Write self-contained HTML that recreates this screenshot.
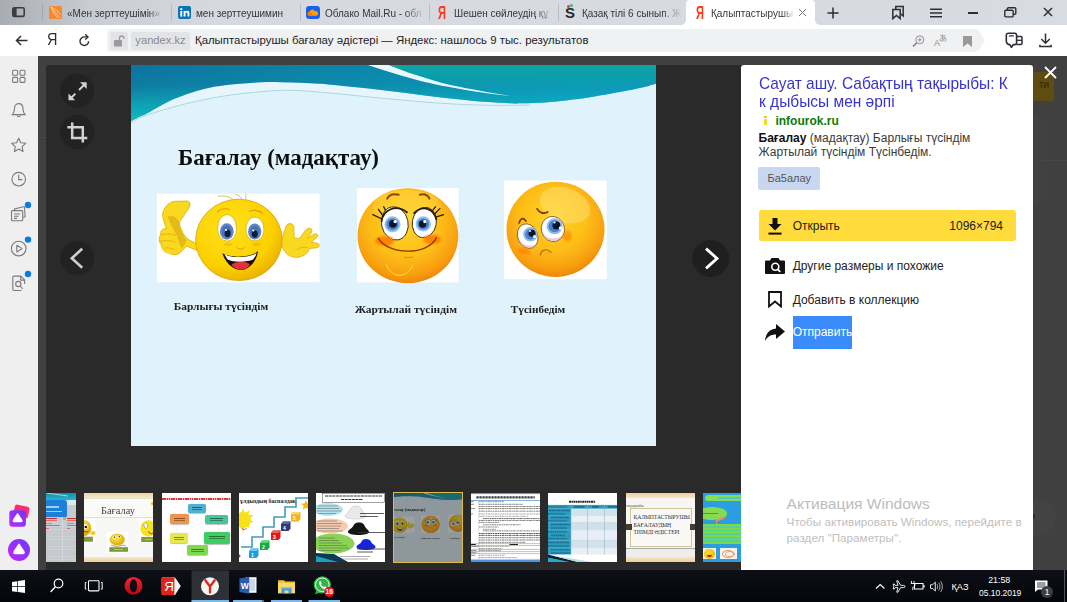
<!DOCTYPE html>
<html><head><meta charset="utf-8">
<style>
*{box-sizing:border-box;margin:0;padding:0}
html,body{width:1067px;height:602px;overflow:hidden;background:#404040;font-family:"Liberation Sans",sans-serif;}
.abs{position:absolute}
#tabbar{left:0;top:0;width:1067px;height:25px;background:linear-gradient(90deg,#a9acb3 0px,#c9ccd3 90px,#d6d9e0 220px,#d8dbe2 1067px);}
.tab{position:absolute;top:0;height:26px;font-size:10.5px;color:#33363c;line-height:26.500px;white-space:nowrap;overflow:hidden}
.tabsep{position:absolute;top:4px;width:1px;height:17px;background:#b9bcc3}
#toolbar{left:0;top:25px;width:1067px;height:31px;background:#fff}
#addr{left:107px;top:29px;width:871px;height:23px;background:#f0f1f3;border-radius:3px}
#sidebar{left:0;top:56px;width:37.500px;height:514px;background:#efefef}
#overlay{left:37.500px;top:56px;width:1029.500px;height:514px;background:#404040}
#viewer{left:46px;top:65px;width:696px;height:505px;background:#2a2a2a;border-radius:3px 0 0 0}
#slide{left:131px;top:65px;width:525px;height:381px;background:#e0f3fc;overflow:hidden}
#panel{left:741px;top:65px;width:292px;height:505px;background:#fff;border-radius:3px 3px 0 0}
#taskbar{left:0;top:570px;width:1067px;height:32px;background:linear-gradient(180deg,#2a2a2a 0,#2a2a2a .4px,#0c0f15 .5px,#04060b 100%)}
.thumb{position:absolute;top:493px;height:69px;width:69px;background:#fff;overflow:hidden}

.ya{font-size:18.500px;color:#fb3a1c;line-height:20px;font-weight:bold;transform:scaleX(.6);transform-origin:0 0}
.tt{display:inline-block;transform-origin:0 50%;transform:scaleX(.95)}
.fade{-webkit-mask-image:linear-gradient(90deg,#000 80%,transparent 100%);mask-image:linear-gradient(90deg,#000 80%,transparent 100%)}
.fade2{-webkit-mask-image:linear-gradient(90deg,#000 85%,transparent 100%);mask-image:linear-gradient(90deg,#000 85%,transparent 100%)}
.t12{font-size:12px;line-height:16px;color:#222;white-space:nowrap}
.sp{display:inline-block;transform-origin:0 50%}
.bx{border-radius:2px;box-shadow:0 .5px 1px rgba(0,0,0,.25)}
.bx:after{content:"";position:absolute;left:20%;right:20%;top:35%;height:1px;background:rgba(0,0,0,.45);box-shadow:0 2px 0 rgba(0,0,0,.35)}
</style></head><body>
<div id="tabbar" class="abs">
<svg class="abs" style="left:12px;top:7px" width="13" height="11" viewBox="0 0 13 11"><rect x="0.8" y="0.8" width="11.4" height="8.6" rx="1.5" fill="none" stroke="#3a3c40" stroke-width="1.6"/><rect x="1" y="1" width="3.6" height="8.4" fill="#3a3c40"/></svg>
<div class="tabsep" style="left:42px;background:#a4a7ae"></div>
<div class="tabsep" style="left:171px"></div>
<div class="tabsep" style="left:300px"></div>
<div class="tabsep" style="left:429px"></div>
<div class="tabsep" style="left:558px"></div>
<!-- tab1 -->
<svg class="abs" style="left:49px;top:6px" width="13" height="13" viewBox="0 0 13 13"><rect width="13" height="13" rx="1.5" fill="#f58a2e"/><path d="M2 1 L11 12 M2 1 Q8 3 12 9 M2 1 Q4 8 9 12" stroke="#ffd2a6" stroke-width="0.8" fill="none"/></svg>
<div class="tab fade2" style="left:67px;width:96px"><span class="tt" id="t1">«Мен зерттеушімін»</span></div>
<!-- tab2 -->
<svg class="abs" style="left:178px;top:6px" width="13" height="13" viewBox="0 0 13 13"><rect width="13" height="13" rx="2" fill="#0a73b7"/><rect x="2.3" y="5" width="1.9" height="5.6" fill="#fff"/><circle cx="3.25" cy="3.2" r="1.15" fill="#fff"/><path d="M5.6 5h1.8v.9c.4-.7 1.1-1.1 2-1.1 1.5 0 2 .9 2 2.5v3.3H9.500V7.700c0-.8-.2-1.300-.9-1.300-.8 0-1.100.6-1.100 1.300v2.900H5.600z" fill="#fff"/></svg>
<div class="tab" style="left:196px;width:100px"><span class="tt" id="t2">мен зерттеушимин</span></div>
<!-- tab3 -->
<svg class="abs" style="left:306px;top:6px" width="14" height="13" viewBox="0 0 14 13"><rect width="14" height="13" rx="3.2" fill="#1b5ff0"/><path d="M3 9.800a2 2 0 0 1 .3-3.900a3 3 0 0 1 5.600-.6a2.300 2.300 0 0 1 1.500 4.500z" fill="#ff9e00"/><path d="M3 9.800a2 2 0 0 1 .3-3.900 L8 9.800z" fill="#ff7a00"/></svg>
<div class="tab fade" style="left:325px;width:100px"><span class="tt" id="t3">Облако Mail.Ru - обл</span></div>
<!-- tab4 -->
<div class="abs ya" style="left:438px;top:2.500px">Я</div>
<div class="tab fade" style="left:454px;width:100px"><span class="tt" id="t4">Шешен сөйлеудің құ</span></div>
<!-- tab5 -->
<div class="abs" style="left:565px;top:4px;font-size:15px;font-weight:bold;color:#2a2a2a;line-height:17px">S</div>
<div class="abs" style="left:567px;top:5px;width:3px;height:3px;background:#e33;border-radius:50%"></div>
<div class="abs" style="left:570px;top:4px;width:3px;height:3px;background:#3b6;border-radius:50%"></div>
<div class="tab fade" style="left:582px;width:100px"><span class="tt" id="t5">Қазақ тілі 6 сынып. Ж</span></div>
<!-- active tab -->
<svg class="abs" style="left:680px;top:0" width="142" height="25" viewBox="0 0 142 25"><path d="M0 25 C4 25 6 23 6 19 L6 4 Q6 0 10 0 L131 0 Q135 0 135 4 L135 19 C135 23 137 25 142 25 Z" fill="#fff"/></svg>
<div class="abs ya" style="left:695.600px;top:2.500px">Я</div>
<div class="tab fade2" style="left:711px;width:84px"><span class="tt" id="t6">Қалыптастырушы б</span></div>
<svg class="abs" style="left:798px;top:8px" width="9" height="9" viewBox="0 0 9 9"><path d="M1 1L8 8M8 1L1 8" stroke="#777" stroke-width="1"/></svg>
<!-- plus -->
<svg class="abs" style="left:827px;top:7px" width="12" height="12" viewBox="0 0 12 12"><path d="M6 0.500V11.500M0.500 6H11.500" stroke="#2c2e33" stroke-width="1.500"/></svg>
<!-- bookmarks -->
<svg class="abs" style="left:891px;top:5px" width="14" height="15" viewBox="0 0 14 15"><path d="M1.800 4.600h7.400v9l-3.700-3.200-3.700 3.200z" fill="none" stroke="#2c2e33" stroke-width="1.500" stroke-linejoin="miter"/><path d="M4.800 4V1.500h7.400v9.500l-2.400-2" fill="none" stroke="#2c2e33" stroke-width="1.500"/></svg>
<!-- menu -->
<svg class="abs" style="left:930px;top:8px" width="12" height="10" viewBox="0 0 12 10"><path d="M0 1.200H12M0 5H12M0 8.800H12" stroke="#2c2e33" stroke-width="1.400"/></svg>
<!-- minimize -->
<div class="abs" style="left:968px;top:12px;width:10px;height:1.500px;background:#2c2e33"></div>
<!-- restore -->
<svg class="abs" style="left:1004px;top:7px" width="13" height="11" viewBox="0 0 13 11"><rect x="0.800" y="3.300" width="8.400" height="6.600" rx="1" fill="none" stroke="#2c2e33" stroke-width="1.400"/><path d="M3.400 3V1.700a1 1 0 0 1 1-1h6.400a1 1 0 0 1 1 1v4.600a1 1 0 0 1-1 1H9.500" fill="none" stroke="#2c2e33" stroke-width="1.400"/></svg>
<!-- close -->
<svg class="abs" style="left:1043px;top:7px" width="10" height="10" viewBox="0 0 10 10"><path d="M1 1L9 9M9 1L1 9" stroke="#2c2e33" stroke-width="1.500"/></svg>
</div>
<div id="toolbar" class="abs">
<!-- back -->
<svg class="abs" style="left:15px;top:10px" width="13" height="11" viewBox="0 0 13 11"><path d="M12.500 5.500H1.500M6 1L1.500 5.500L6 10" fill="none" stroke="#2c2e33" stroke-width="1.500"/></svg>
<div class="abs" style="left:47px;top:5px;font-size:17px;line-height:20px;color:#2c2e33;transform:scaleX(.85);transform-origin:0 0">Я</div>
<!-- reload -->
<svg class="abs" style="left:78px;top:9px" width="13" height="13" viewBox="0 0 13 13"><path d="M10.600 7.200A4.300 4.300 0 1 1 6.300 2.900H9" fill="none" stroke="#2c2e33" stroke-width="1.400"/><path d="M7.300 0.300L10 2.900L7.300 5.500" fill="none" stroke="#2c2e33" stroke-width="1.400"/></svg>

<!-- feedback -->
<svg class="abs" style="left:1005px;top:7px" width="19" height="17" viewBox="0 0 19 17"><path d="M1.300 3.200a2 2 0 0 1 2-2h6.300a2 2 0 0 1 2 2v7.800a1.600 1.600 0 0 1-1.600 1.600H8.200L6.500 15.300 4.800 12.600a3.500 3.500 0 0 1-3.500-3.500z" fill="none" stroke="#2c2e33" stroke-width="1.600" stroke-linejoin="round"/><path d="M4.500 3.900h3.800" stroke="#2c2e33" stroke-width="1.400" stroke-linecap="round"/><path d="M11.600 4.400h4.400a1 1 0 0 1 1 1v6.200a1 1 0 0 1-1 1h-4.400" fill="none" stroke="#2c2e33" stroke-width="1.500"/><path d="M11.600 8.300h5.400" stroke="#2c2e33" stroke-width="1.300"/></svg>
<!-- download -->
<svg class="abs" style="left:1039px;top:8px" width="13" height="15" viewBox="0 0 13 15"><path d="M6.500 0.500V10M2.300 6L6.500 10.200L10.700 6" fill="none" stroke="#2c2e33" stroke-width="1.500"/><path d="M0.900 11.800V13.600H12.100V11.800" fill="none" stroke="#2c2e33" stroke-width="1.500"/></svg>
</div>
<div id="addr" class="abs">
<svg class="abs" style="left:871px;top:0" width="7" height="23" viewBox="0 0 7 23"><path d="M0 0L7 11.500L0 23z" fill="#f0f1f3"/></svg>
<div class="abs" style="left:3px;top:3px;width:18px;height:17.500px;background:#e3e4e7;border-radius:2px"></div>
<svg class="abs" style="left:7px;top:6px" width="11" height="12" viewBox="0 0 11 12"><rect x="0" y="5" width="8" height="6.500" rx="0.800" fill="#9b9b9b"/><path d="M5.500 5V3.200a2.200 2.200 0 0 1 4.400 0V4" fill="none" stroke="#9b9b9b" stroke-width="1.300"/></svg>
<div class="abs" style="left:24px;top:3px;width:59px;height:17.500px;background:#e3e4e7;border-radius:2px;font-size:11.2px;line-height:17.500px;color:#8a8a8a;text-align:center"><span id="dom" style="display:inline-block">yandex.kz</span></div>
<div class="abs" style="left:88px;top:0;font-size:11.4px;line-height:23.500px;color:#222;white-space:nowrap"><span id="ttl" style="display:inline-block;transform-origin:0 50%">Қалыптастырушы бағалау әдістері — Яндекс: нашлось 9 тыс. результатов</span></div>
<!-- zoom -->
<svg class="abs" style="left:805px;top:6px" width="13" height="12" viewBox="0 0 13 12"><circle cx="7.800" cy="4.800" r="4" fill="none" stroke="#8f8f8f" stroke-width="1"/><path d="M5.800 4.800h4M7.800 2.800v4" stroke="#8f8f8f" stroke-width="0.900"/><path d="M4.800 7.800L1 11.400" stroke="#8f8f8f" stroke-width="1.800"/></svg>
<!-- translate -->
<div class="abs" style="left:827px;top:9px;font-size:9px;line-height:10px;color:#8f8f8f">A</div>
<svg class="abs" style="left:832px;top:5.300px" width="8" height="8" viewBox="0 0 8 8"><path d="M1 1.800H6.600M3.600 0.300C3.300 3 3.500 5.500 4.200 7.300M6 3.200C5.600 5.300 3.800 7 2.200 7C0.600 7 0.500 5.200 2 4.300C3.800 3.300 6.600 3.600 7.200 5.200C7.600 6.400 6.600 7.300 5.400 7.600" fill="none" stroke="#8f8f8f" stroke-width=".8"/></svg>
<!-- bookmark -->
<svg class="abs" style="left:856px;top:7px" width="9" height="11" viewBox="0 0 9 11"><path d="M0 0h9v11L4.500 7.500 0 11z" fill="#9a9a9a"/></svg>
</div>
<div id="sidebar" class="abs">
<svg class="abs" style="left:0;top:0" width="38" height="514" viewBox="0 56 38 514">
<g fill="none" stroke="#7a7a7a" stroke-width="1.100">
<!-- grid -->
<rect x="12.600" y="70.200" width="5" height="5" rx="1"/><rect x="20" y="70.200" width="5" height="5" rx="1"/><rect x="12.600" y="77.400" width="5" height="5" rx="1"/><rect x="20" y="77.400" width="5" height="5" rx="1"/>
<!-- bell -->
<path d="M18.700 103.600c-3 0-4.300 2.600-4.300 5.400 0 2.800-.8 4.200-2 5.600h12.600c-1.200-1.400-2-2.800-2-5.600 0-2.800-1.300-5.400-4.300-5.400z"/><path d="M17 115.400a1.800 1.800 0 0 0 3.400 0"/>
<!-- star -->
<path d="M18.700 138.200l2.100 4.500 4.900.6-3.600 3.400.9 4.800-4.300-2.400-4.300 2.400.9-4.800-3.600-3.400 4.900-.6z" stroke-linejoin="round"/>
<!-- clock -->
<circle cx="18.700" cy="179.200" r="6.800"/><path d="M18.700 174.800v4.800h3.600"/>
<!-- docs -->
<path d="M14.500 210.500l0-1.500 9-2.300a.8.800 0 0 1 1 .6l.6 9.500-1.800.5" /><rect x="11.500" y="210.600" width="11.200" height="10.200" rx="1"/><path d="M14 214h6M14 216.200h4.500M14 218.400h3"/>
<!-- play -->
<circle cx="18.700" cy="248.600" r="7.300"/><path d="M16.800 245.200l5.300 3.400-5.300 3.400z" stroke-linejoin="round"/>
<!-- searchdoc -->
<path d="M21.500 290.500h-7.500a1.200 1.200 0 0 1-1.200-1.200v-12a1.200 1.200 0 0 1 1.200-1.200h6.800l3.800 3.800v4"/><path d="M20.600 276.300v3.800h3.800"/><circle cx="18.300" cy="284" r="2.600"/><path d="M20.200 286l2.600 2.800"/>
</g>
<circle cx="28" cy="205" r="3.200" fill="#0a7bea"/><circle cx="28" cy="239.600" r="3.200" fill="#0a7bea"/><circle cx="28" cy="274" r="3.200" fill="#0a7bea"/>
<defs><linearGradient id="al" x1="0" y1="1" x2="1" y2="0"><stop offset="0" stop-color="#c02bf7"/><stop offset="1" stop-color="#6a36ff"/></linearGradient></defs>
<rect x="14" y="505.500" width="15" height="12" rx="2.500" fill="#ff2d6f" transform="rotate(12 21 511)"/>
<rect x="9.300" y="510.200" width="16.600" height="16.600" rx="3.200" fill="url(#al)"/>
<path d="M17.600 513.800l4.200 6.400q.7 1.400-1 1.400h-6.400q-1.700 0-1-1.400z" fill="#fff" stroke="#fff" stroke-width="1.200" stroke-linejoin="round"/>
<circle cx="19" cy="550" r="11" fill="url(#al)"/>
<path d="M19 544.400l4.800 7.400q.8 1.600-1.100 1.600h-7.400q-1.900 0-1.100-1.600z" fill="#fff" stroke="#fff" stroke-width="1.600" stroke-linejoin="round"/>
</svg>
</div>
<div id="overlay" class="abs"></div>
<div class="abs" style="left:37.500px;top:137px;width:9px;height:1px;background:#4a4a4a"></div><div id="viewer" class="abs">
<svg class="abs" style="left:0;top:0" width="696" height="505" viewBox="46 65 696 505">
<circle cx="77.200" cy="90.700" r="17" fill="#222"/>
<g stroke="#d2d2d2" stroke-width="2" fill="none"><path d="M79 90L84.500 84.500"/><path d="M75.400 93.600L70.500 98.500"/></g><path d="M80 82.200H86.700V88.900z" fill="#d2d2d2"/><path d="M68.500 93.500V100.200H75.200z" fill="#d2d2d2"/>
<circle cx="77.200" cy="132" r="17" fill="#222"/>
<g stroke="#d2d2d2" stroke-width="2.500" fill="none"><path d="M72.200 122.600V138H87.300"/><path d="M67.300 127.300H82.800V142.600"/></g>
<circle cx="77.200" cy="258.300" r="17" fill="#222"/>
<path d="M82.200 248.800L71.800 258.300L82.200 267.800" stroke="#cfcfcf" stroke-width="2.600" fill="none"/>
<circle cx="710.700" cy="258.500" r="18.500" fill="#1f1f1f"/>
<path d="M706 248.600L717 258.500L706 268.400" stroke="#fff" stroke-width="2.800" fill="none"/>
</svg>
</div>
<div id="slide" class="abs">
<svg class="abs" style="left:0;top:0" width="525" height="381" viewBox="131 65 525 381">
<defs>
<linearGradient id="teal" gradientUnits="userSpaceOnUse" x1="131" y1="0" x2="656" y2="0"><stop offset="0" stop-color="#08739f"/><stop offset="0.350" stop-color="#0882a6"/><stop offset="0.600" stop-color="#088ab0"/><stop offset="0.800" stop-color="#0890bc"/><stop offset="1" stop-color="#0894b8"/></linearGradient>
<linearGradient id="tealv" gradientUnits="userSpaceOnUse" x1="0" y1="65" x2="0" y2="122"><stop offset="0" stop-color="#10b8bc" stop-opacity="0"/><stop offset="0.350" stop-color="#10b8bc" stop-opacity=".12"/><stop offset="0.700" stop-color="#12b6bc" stop-opacity=".7"/><stop offset="1" stop-color="#14b8bc" stop-opacity="1"/></linearGradient>
<linearGradient id="tealg" gradientUnits="userSpaceOnUse" x1="0" y1="65" x2="0" y2="98"><stop offset="0" stop-color="#0aa4a6" stop-opacity="1"/><stop offset="0.450" stop-color="#0aa0aa" stop-opacity=".7"/><stop offset="1" stop-color="#0a9cb0" stop-opacity="0"/></linearGradient>
<radialGradient id="yel" cx="0.400" cy="0.350" r="0.700"><stop offset="0" stop-color="#ffe21a"/><stop offset="0.700" stop-color="#fbd000"/><stop offset="1" stop-color="#e8ad00"/></radialGradient>
<radialGradient id="org" cx="0.450" cy="0.350" r="0.700"><stop offset="0" stop-color="#ffd21c"/><stop offset="0.600" stop-color="#fdb813"/><stop offset="1" stop-color="#f08c0a"/></radialGradient>
<radialGradient id="org2" cx="0.480" cy="0.380" r="0.620"><stop offset="0" stop-color="#ffd42a"/><stop offset="0.550" stop-color="#fdbe16"/><stop offset="0.850" stop-color="#f8a010"/><stop offset="1" stop-color="#ee8808"/></radialGradient>
<radialGradient id="iris" cx="0.500" cy="0.500" r="0.500"><stop offset="0" stop-color="#4b86d8"/><stop offset="0.700" stop-color="#6ea6e6"/><stop offset="1" stop-color="#3f6fb8"/></radialGradient>
<filter id="bl2" x="-30%" y="-50%" width="160%" height="200%"><feGaussianBlur stdDeviation="1.300"/></filter>
<filter id="bl" x="-2%" y="-2%" width="104%" height="104%"><feGaussianBlur stdDeviation="0.550"/></filter>
</defs>
<g id="sc"><rect x="131" y="65" width="525" height="381" fill="#e0f3fc"/>
<g filter="url(#bl)">
<!-- wave -->
<path d="M131.0,121.2 C132.5,120.4 136.9,118.0 140.0,116.5 C143.1,115.0 144.9,114.4 149.7,111.9 C154.4,109.4 162.2,104.6 168.5,101.6 C174.8,98.6 180.9,96.3 187.2,94.1 C193.4,91.9 199.8,89.9 206.0,88.4 C212.2,86.9 218.4,86.0 224.7,85.2 C230.9,84.4 237.2,83.9 243.5,83.4 C249.8,82.9 255.9,82.4 262.2,82.2 C268.4,82.0 274.8,82.1 281.0,82.2 C287.2,82.3 293.5,82.5 299.7,82.8 C305.9,83.0 313.2,83.4 318.4,83.7 C323.6,84.0 322.6,83.9 331.0,84.7 C339.4,85.5 356.0,87.0 368.5,88.4 C381.0,89.8 393.5,91.5 406.0,93.1 C418.5,94.7 431.0,96.4 443.5,97.8 C456.0,99.2 470.1,100.7 481.0,101.6 C491.9,102.5 502.1,103.0 509.0,103.3 C515.9,103.6 520.2,103.3 522.5,103.3 L530,105 " fill="none"/>
<path d="M131.0,123.0 C132.9,122.0 136.5,119.0 142.2,116.8 C147.9,114.5 157.5,111.7 165.0,109.5 C172.5,107.3 177.2,105.7 187.2,103.4 C197.1,101.1 212.2,97.9 224.7,95.9 C237.2,93.9 251.3,92.5 262.2,91.6 C273.1,90.7 278.8,90.0 290.3,90.3 C301.8,90.5 314.9,91.7 331.0,93.1 C347.1,94.5 368.4,97.0 387.2,98.7 C405.9,100.4 426.3,102.3 443.5,103.4 C460.7,104.5 475.9,105.0 490.3,105.3 C504.7,105.6 523.4,105.0 530.0,105.0 L530,103 L509.0,103.3 L481.0,101.6 L443.5,97.8 L406.0,93.1 L368.5,88.4 L331.0,84.7 L318.4,83.7 L299.7,82.8 L281.0,82.2 L262.2,82.2 L243.5,83.4 L224.7,85.2 L206.0,88.4 L187.2,94.1 L168.5,101.6 L149.7,111.9 L140.0,116.5 L131.0,121.2 Z" fill="#e7f6fc"/>
<path d="M131.0,121.2 C132.5,120.4 136.9,118.0 140.0,116.5 C143.1,115.0 144.9,114.4 149.7,111.9 C154.4,109.4 162.2,104.6 168.5,101.6 C174.8,98.6 180.9,96.3 187.2,94.1 C193.4,91.9 199.8,89.9 206.0,88.4 C212.2,86.9 218.4,86.0 224.7,85.2 C230.9,84.4 237.2,83.9 243.5,83.4 C249.8,82.9 255.9,82.4 262.2,82.2 C268.4,82.0 274.8,82.1 281.0,82.2 C287.2,82.3 293.5,82.5 299.7,82.8 C305.9,83.0 313.2,83.4 318.4,83.7 C323.6,84.0 322.6,83.9 331.0,84.7 C339.4,85.5 356.0,87.0 368.5,88.4 C381.0,89.8 393.5,91.5 406.0,93.1 C418.5,94.7 431.0,96.4 443.5,97.8 C456.0,99.2 470.1,100.7 481.0,101.6 C491.9,102.5 502.1,103.0 509.0,103.3 C515.9,103.6 516.5,103.4 522.5,103.3 C528.5,103.2 537.5,103.0 545.0,102.5 C552.5,102.0 560.0,101.1 567.5,100.2 C575.0,99.3 581.2,98.6 590.0,97.2 C598.8,95.8 611.3,93.6 620.0,92.0 C628.7,90.4 636.4,88.9 642.4,87.5 C648.4,86.1 653.7,84.3 656.0,83.7 L660,83 L660,60 L125,60 L125,124 Z" fill="url(#teal)"/>
<path d="M131.0,121.2 C132.5,120.4 136.9,118.0 140.0,116.5 C143.1,115.0 144.9,114.4 149.7,111.9 C154.4,109.4 162.2,104.6 168.5,101.6 C174.8,98.6 180.9,96.3 187.2,94.1 C193.4,91.9 199.8,89.9 206.0,88.4 C212.2,86.9 218.4,86.0 224.7,85.2 C230.9,84.4 237.2,83.9 243.5,83.4 C249.8,82.9 255.9,82.4 262.2,82.2 C268.4,82.0 274.8,82.1 281.0,82.2 C287.2,82.3 293.5,82.5 299.7,82.8 C305.9,83.0 313.2,83.4 318.4,83.7 C323.6,84.0 322.6,83.9 331.0,84.7 C339.4,85.5 356.0,87.0 368.5,88.4 C381.0,89.8 393.5,91.5 406.0,93.1 C418.5,94.7 431.0,96.4 443.5,97.8 C456.0,99.2 470.1,100.7 481.0,101.6 C491.9,102.5 502.1,103.0 509.0,103.3 C515.9,103.6 516.5,103.4 522.5,103.3 C528.5,103.2 537.5,103.0 545.0,102.5 C552.5,102.0 560.0,101.1 567.5,100.2 C575.0,99.3 581.2,98.6 590.0,97.2 C598.8,95.8 611.3,93.6 620.0,92.0 C628.7,90.4 636.4,88.9 642.4,87.5 C648.4,86.1 653.7,84.3 656.0,83.7 L660,83 L660,60 L125,60 L125,124 Z" fill="url(#tealv)"/>
<path d="M364.700,63 C380,69.500 405,77 424.700,81.900 C445,86.500 480,93 514.700,96.500 L560,96 L660,80 L660,60 Z" fill="url(#tealg)"/>
<path d="M131.0,123.0 C132.9,122.0 136.5,119.0 142.2,116.8 C147.9,114.5 157.5,111.7 165.0,109.5 C172.5,107.3 177.2,105.7 187.2,103.4 C197.1,101.1 212.2,97.9 224.7,95.9 C237.2,93.9 251.3,92.5 262.2,91.6 C273.1,90.7 278.8,90.0 290.3,90.3 C301.8,90.5 314.9,91.7 331.0,93.1 C347.1,94.5 368.4,97.0 387.2,98.7 C405.9,100.4 426.3,102.3 443.5,103.4 C460.7,104.5 475.9,105.0 490.3,105.3 C504.7,105.6 523.4,105.0 530.0,105.0" stroke="#a6d2d8" stroke-width="0.900" fill="none"/>
<path d="M362.500,63 C380,69.500 405,77 424.700,81.900 C445,86.500 480,93 514.700,96.500 C495,94 470,89 452.800,85.600 C430,80 405,72 383.500,63 Z" fill="#e9f8fc"/>
<!-- title -->
<text id="stitle" x="178" y="164.900" font-family="Liberation Serif" font-weight="bold" font-size="22.500" fill="#111" textLength="201" lengthAdjust="spacingAndGlyphs">Бағалау (мадақтау)</text>
<!-- emoji 1 -->
<rect x="157" y="193.700" width="162.500" height="88.500" fill="#fff"/>
<g id="e1">
<path d="M162.5,214.9 C163.0,208.3 168.3,202.0 174.9,201.3 L187.4,201.0 C190.7,201.3 190.7,205.3 188.2,209.1 L179.9,221.6 C179.1,224.1 179.9,226.6 181.6,229.9 C184.1,237.4 190.7,241.5 196.7,243.2 L196.7,250.5 C191.6,248.2 188.2,246.500 186.2,246.500 C183.2,249.0 181.6,252.3 178.3,254.0 C174.9,255.1 170.8,254.8 168.3,252.8 C164.1,251.8 160.8,248.2 161.3,244.8 C158.7,242.3 158.3,237.4 160.8,234.0 C160.0,230.7 162.5,228.6 166.3,228.6 C165.0,224.9 163.0,219.9 162.5,214.9 Z" fill="#f9d820" stroke="#d8a800" stroke-width=".7"/>
<path d="M167.500,216.6 C171.6,214.9 176.6,216.6 179.1,221.6 C179.9,228.2 183.2,236.500 186.6,239.9 C185.7,243.2 184.1,246.500 181.6,248.2 C179.9,244.8 178.3,239.9 176.6,236.500 C174.9,231.500 170.0,223.2 167.500,216.6 Z" fill="#e6ba18"/>
<path d="M161.6,234.9 C166.6,233.500 173.3,233.500 176.6,235.7 M160.3,241.500 C165.0,239.9 171.6,240.2 175.8,242.8 M164.1,248.2 C168.3,247.3 172.4,248.2 174.9,250.2" stroke="#d8a800" stroke-width=".7" fill="none"/>
<path d="M161.5,236 C164,229.500 174,229.500 177.500,236 L177,250 C174,255.500 166,255 162.500,250 Z" fill="#f9d820"/>
<path d="M161.6,234.9 C166.6,233.500 173.3,233.500 176.6,235.7 M160.3,241.500 C165.0,239.9 171.6,240.2 175.8,242.8 M164.1,248.2 C168.3,247.3 172.4,248.2 174.9,250.2" stroke="#d8a800" stroke-width=".7" fill="none"/>
<path d="M286.3,225.7 C287.9,222.9 292.1,222.9 293.8,225.7 L294.2,237.4 C296.2,238.500 298.7,238.500 299.9,237.9 L306.2,229.500 C307.9,227.9 311.2,227.9 312.0,229.9 C312.500,232.4 308.7,236.500 307.500,238.2 L314.500,233.9 C316.500,232.9 318.7,234.9 317.500,236.9 L311.2,242.3 L317.500,243.2 C319.8,243.500 319.8,247.3 317.500,247.7 L309.500,248.500 C308.7,252.3 304.6,256.1 298.2,257.3 C292.9,257.8 287.9,256.1 285.4,252.3 C282,248.2 281,243.2 282,238.2 Z" fill="#f9d820" stroke="#d8a800" stroke-width=".7"/>
<path d="M297,250 C300,247 305,246.500 308.500,248" stroke="#d8a800" stroke-width=".7" fill="none"/>
<ellipse cx="238.9" cy="239.9" rx="43.2" ry="40.7" fill="url(#yel)" stroke="#d8a400" stroke-width=".8"/>
<path d="M233.1,199.6 C229.8,196.6 223.1,195.3 217.8,196.3 M241.7,199.1 C240.6,196.6 238.1,195.0 235.6,194.2 M245.6,199.1 C246.1,196.6 246.1,195.0 245.6,193.7" stroke="#c8b040" stroke-width=".8" fill="none"/>
<path d="M217.3,212.4 C219.0,209.1 224.8,207.4 229.8,209.9 M248.9,211.6 C252.2,209.6 258.9,209.6 263.0,213.6" stroke="#d8a000" stroke-width="1.100" fill="none"/>
<path d="M217.800,229 C217.800,220 222,214.700 227.100,214.700 C232.500,214.700 236.600,221 236.400,229 C236.300,236 232.500,241 227.100,241 C221.800,241 217.800,236 217.800,229 Z" fill="#fff" stroke="#c9a000" stroke-width=".6"/>
<path d="M246,229.500 C246,222 249.800,217.200 254.900,217.200 C260,217.200 263.800,222.500 263.800,229.500 C263.800,236 260,240.800 254.900,240.800 C249.800,240.800 246,236 246,229.500 Z" fill="#fff" stroke="#c9a000" stroke-width=".6"/>
<ellipse cx="226.800" cy="231.500" rx="6.900" ry="8.300" fill="#5f86c8"/><ellipse cx="254.700" cy="231.500" rx="6.600" ry="8" fill="#5f86c8"/>
<ellipse cx="226.800" cy="231.500" rx="4.800" ry="6" fill="#4a70b6"/><ellipse cx="254.700" cy="231.500" rx="4.600" ry="5.800" fill="#4a70b6"/>
<ellipse cx="227.600" cy="233.500" rx="3" ry="3.800" fill="#111c38"/><ellipse cx="254.700" cy="234" rx="3" ry="3.800" fill="#111c38"/>
<circle cx="226" cy="230" r="1.100" fill="#fff"/><circle cx="253.300" cy="230.500" r="1.100" fill="#fff"/>
<path d="M236.4,247.3 C238.1,249.500 243.1,249.500 244.7,247.3" stroke="#dca000" stroke-width="1" fill="none"/>
<ellipse cx="228.100" cy="244.200" rx="4.200" ry="1.800" fill="#f5a400" opacity=".45"/><ellipse cx="256.400" cy="244.200" rx="4.200" ry="1.800" fill="#f5a400" opacity=".45"/>
<path d="M222.3,253.1 C228.1,258.1 251.4,258.1 258.0,251.1 C257.2,259.8 249.7,270.1 240.6,270.1 C232.3,270.1 224.8,261.500 222.3,253.1 Z" fill="#1c0e08"/>
<path d="M224.500,254.0 C229.8,258.500 250.500,258.1 256.7,252.8 C256.0,255.6 254.7,257.8 253.0,259.500 C248.1,262.3 233.1,262.3 228.1,259.8 C226.500,258.1 225.1,256.1 224.500,254.0 Z" fill="#fff"/>
<path d="M231.4,265.1 C234.8,261.1 246.4,260.6 250.0,264.4 C248.1,267.8 244.7,269.8 240.6,269.8 C236.8,269.8 233.4,267.8 231.4,265.1 Z" fill="#e0303c"/>
</g>
<text x="173.700" y="310" font-family="Liberation Serif" font-weight="bold" font-size="11" fill="#222" textLength="94.600" lengthAdjust="spacingAndGlyphs">Барлығы түсіндім</text>
<!-- emoji 2 -->
<rect x="356.900" y="188.200" width="101.600" height="94.200" fill="#fff"/>
<g id="e2">
<ellipse cx="407.900" cy="235.700" rx="50.400" ry="47.500" fill="url(#org2)"/>
<ellipse cx="407" cy="206" rx="34" ry="16" fill="#ffe15a" opacity=".35"/>
<path d="M386.300,263.900 C388,272 396,276 400,275.300 C405,275.300 411,271 412.700,264.800" stroke="#ffe23a" stroke-width="1" fill="none" opacity=".9"/>
<path d="M387.200,198.700 C389,195 393,193.500 398.700,194.700" stroke="#8a4600" stroke-width="1.900" fill="none" stroke-linecap="round"/>
<path d="M419.800,194.700 C425,193.500 428,195.500 429.500,198.700" stroke="#8a4600" stroke-width="1.900" fill="none" stroke-linecap="round"/>
<path d="M381.9,219.0 L372.8,214.6 M382.8,215.5 L378.4,209.3 M386.3,211.9 L383.7,206.7" stroke="#2a1a10" stroke-width="1.300" stroke-linecap="round"/>
<path d="M435.6,217.2 L443.6,214.6 M434.8,213.7 L440.0,208.4 M432.1,211.1 L435.6,206.7" stroke="#2a1a10" stroke-width="1.300" stroke-linecap="round"/>
<ellipse cx="394.800" cy="223.400" rx="13.300" ry="16.800" fill="#fff" stroke="#3a2a10" stroke-width=".9" transform="rotate(-12 394.800 223.400)"/>
<ellipse cx="424.300" cy="222.500" rx="12" ry="15.200" fill="#fff" stroke="#3a2a10" stroke-width=".9" transform="rotate(10 424.300 222.500)"/>
<path d="M381.6,221.6 C382.8,210.2 396.0,203.1 407.5,212.8" stroke="#2a1a10" stroke-width="1.800" fill="none"/>
<path d="M413.6,213.7 C422.4,204.0 433.9,208.4 436.5,219.9" stroke="#2a1a10" stroke-width="1.800" fill="none"/>
<circle cx="392.500" cy="224.300" r="8" fill="#8fc2ee"/><circle cx="392.500" cy="224.300" r="6" fill="#4a80d4"/><circle cx="392.900" cy="223.900" r="3.800" fill="#0a1228"/><circle cx="395.200" cy="221.600" r="1.700" fill="#fff"/>
<circle cx="423.300" cy="223.900" r="7.600" fill="#8fc2ee"/><circle cx="423.300" cy="223.900" r="5.700" fill="#4a80d4"/><circle cx="422.600" cy="224.100" r="3.700" fill="#0a1228"/><circle cx="424.800" cy="221.600" r="1.600" fill="#fff"/>
<g filter="url(#bl2)"><ellipse cx="384.600" cy="241" rx="9.500" ry="4.800" fill="#ff8000" opacity=".95"/><ellipse cx="432.100" cy="239.400" rx="9" ry="4.600" fill="#ff8000" opacity=".95"/></g>
<path d="M378.400,238.300 C388,255 428,256 436.500,237.500" stroke="#8a3c00" stroke-width="1.400" fill="none" stroke-linecap="round"/>
<path d="M404,256.800 C407,257.800 410,257.800 412.700,256.800" stroke="#e08a00" stroke-width="1" fill="none"/>
</g>
<text x="354.700" y="312.800" font-family="Liberation Serif" font-weight="bold" font-size="11" fill="#222" textLength="102.300" lengthAdjust="spacingAndGlyphs">Жартылай түсіндім</text>
<!-- emoji 3 -->
<rect x="504" y="180.500" width="102.700" height="98.700" fill="#fff"/>
<g id="e3">
<ellipse cx="555.500" cy="229.300" rx="49" ry="47.600" fill="url(#org2)"/>
<ellipse cx="565" cy="205" rx="26" ry="17" fill="#ffe98a" opacity=".4" transform="rotate(20 565 205)"/>
<path d="M519.1,223.0 C520.2,219.1 523.2,216.4 525.9,221.2" stroke="#7a3200" stroke-width="1.700" fill="none" stroke-linecap="round"/>
<path d="M537.1,208.8 C539.4,212.8 543.9,214.6 547.8,211.9" stroke="#7a3200" stroke-width="1.700" fill="none" stroke-linecap="round"/>
<ellipse cx="527.700" cy="236.100" rx="10" ry="12.600" fill="#fff" stroke="#8a5020" stroke-width=".8" transform="rotate(-22 527.700 236.100)"/>
<ellipse cx="552.900" cy="229" rx="11.600" ry="12.700" fill="#fff" stroke="#8a5020" stroke-width=".8" transform="rotate(-15 552.900 229)"/>
<path d="M519,240 C521,248 530,251 536,244 C531,247 523,246 519,240 Z" fill="#d8a8c8" opacity=".6"/>
<path d="M543,233 C546,242 558,244 563,235 C557,240 548,240 543,233 Z" fill="#d8a8c8" opacity=".6"/>
<circle cx="530.400" cy="234.300" r="7.200" fill="#8fbcea"/><circle cx="530.400" cy="234.300" r="5.300" fill="#4a7ed0"/><circle cx="532" cy="233.300" r="3.500" fill="#0a1228"/><circle cx="534.500" cy="236.500" r="1.500" fill="#fff"/><circle cx="530" cy="231" r="1" fill="#fff"/>
<circle cx="554.600" cy="226.300" r="8" fill="#8fbcea"/><circle cx="554.600" cy="226.300" r="6" fill="#4a7ed0"/><circle cx="556.400" cy="225.400" r="3.900" fill="#0a1228"/><circle cx="560.500" cy="228" r="1.700" fill="#fff"/><circle cx="554.500" cy="222.500" r="1.100" fill="#fff"/>
<g filter="url(#bl2)"><ellipse cx="524.100" cy="251.400" rx="6.500" ry="3" fill="#ff8600" opacity=".8" transform="rotate(15 524.100 251.400)"/><ellipse cx="567.200" cy="236.100" rx="4.500" ry="5.500" fill="#ff8600" opacity=".7"/></g>
<path d="M540.300,255 C541,250.500 546,247.500 551.100,252.300" stroke="#c07000" stroke-width="1.300" fill="none" stroke-linecap="round"/>
<path d="M545,254 C546,252 548,252 549.500,254" stroke="#e09a20" stroke-width=".8" fill="none"/>
</g>
<text x="510.800" y="312.800" font-family="Liberation Serif" font-weight="bold" font-size="11" fill="#222" textLength="54.400" lengthAdjust="spacingAndGlyphs">Түсінбедім</text>
</g></g>
</svg>
</div>

<div id="thumbs">
<!-- t1 -->
<div class="thumb" style="left:46px;width:30px;background:#c6c9cd">
 <div class="abs" style="left:0;top:0;width:30px;height:8px;background:linear-gradient(180deg,#0d90b6,#35b4ca)"></div>
 <div class="abs" style="left:0;top:1px;width:22px;height:1px;background:#bfe6ee;transform:rotate(8deg);opacity:.8"></div>
 <div class="abs" style="left:14px;top:7px;width:16px;height:5px;background:#d4ecf2;border-radius:60% 0 0 0"></div>
 <div class="abs" style="left:0;top:6.500px;width:20.500px;height:17px;background:#1d80d8;border-radius:0 3px 1px 0"></div>
 <div class="abs" style="left:0;top:12.800px;width:13px;height:1.800px;background:#a4cdf2"></div><div class="abs" style="left:0;top:17.500px;width:15.500px;height:1.800px;background:#a4cdf2"></div>
 <div class="abs" style="left:0;top:24.500px;width:11px;height:1.500px;background:#d02a2a"></div><div class="abs" style="left:0;top:27px;width:11px;height:1.100px;background:#e06a6a"></div><div class="abs" style="left:0;top:29.500px;width:6px;height:1.100px;background:#e06a6a"></div><div class="abs" style="left:0;top:32px;width:14px;height:1.100px;background:#e06a6a"></div><div class="abs" style="left:0;top:34.500px;width:3px;height:1.100px;background:#e06a6a"></div>
 <div class="abs" style="left:20.500px;top:24.500px;width:9.500px;height:1.500px;background:#d02a2a"></div><div class="abs" style="left:20.500px;top:27px;width:9px;height:1.100px;background:#e06a6a"></div><div class="abs" style="left:20.500px;top:29.500px;width:7px;height:1.100px;background:#e06a6a"></div><div class="abs" style="left:20.500px;top:32px;width:9.500px;height:1.100px;background:#e06a6a"></div><div class="abs" style="left:20.500px;top:34.500px;width:3px;height:1.100px;background:#e06a6a"></div>
 <div class="abs" style="left:17px;top:24px;width:2.500px;height:2.500px;background:#e0a040;border-radius:50%"></div>
 <div class="abs" style="left:0;top:24px;width:30px;height:45px;background:repeating-linear-gradient(180deg,transparent 0,transparent 2.600px,rgba(255,255,255,.14) 2.600px,rgba(255,255,255,.14) 3.300px)"></div>
 <div class="abs" style="left:16px;top:24px;width:.6px;height:45px;background:rgba(255,255,255,.25)"></div>
</div>
<!-- t2 -->
<div class="thumb" style="left:84px;background:#f7f7f5">
 <div class="abs" style="left:0;top:0;width:69px;height:5px;background:linear-gradient(180deg,#efd3a4,#f7e6c8)"></div>
 <div class="abs" style="left:0;top:63.500px;width:69px;height:5.500px;background:linear-gradient(180deg,#f7e6c8,#edcf9e)"></div>
 <div class="abs" style="left:0;top:5px;width:69px;height:19.500px;background:#fafaf7;border-top:.8px solid #dfe6d0;border-bottom:.8px solid #dde4cf"></div>
 <div class="abs" style="left:17.300px;top:9.500px;font-family:'Liberation Serif',serif;font-size:11.300px;line-height:14px;color:#444;white-space:nowrap"><span id="t2t" style="display:inline-block;transform-origin:0 50%;transform:scaleX(.92)">Бағалау</span></div>
 <svg class="abs" style="left:0;top:0" width="69" height="69" viewBox="0 0 69 69">
  <defs><radialGradient id="my" cx=".4" cy=".35" r=".7"><stop offset="0" stop-color="#ffe84a"/><stop offset="1" stop-color="#d9a800"/></radialGradient></defs>
  <rect x="0" y="26" width="11.500" height="24" fill="#fff"/><rect x="22.500" y="39" width="21.500" height="21" fill="#fff"/><rect x="55" y="26" width="14" height="24" fill="#fff"/>
  <ellipse cx="0" cy="35.200" rx="7.300" ry="8" fill="url(#my)"/><ellipse cx="9" cy="40" rx="2.600" ry="2" fill="#f2cc1a"/>
  <ellipse cx="1.500" cy="33.500" rx="2" ry="2.600" fill="#fff"/><circle cx="1.800" cy="34" r="1.200" fill="#111"/><path d="M0 38.500q2.500 1.500 4.500-.5" stroke="#b22" stroke-width="1" fill="none"/>
  <rect x="0" y="43.700" width="8.900" height="5" fill="#7e9c34"/>
  <ellipse cx="33.200" cy="46.500" rx="7.600" ry="6" fill="url(#my)"/><ellipse cx="30" cy="44.500" rx="1.600" ry="1.300" fill="#fff"/><ellipse cx="35" cy="44" rx="1.600" ry="1.300" fill="#fff"/><circle cx="30.300" cy="44.300" r=".7" fill="#222"/><circle cx="35.300" cy="43.800" r=".7" fill="#222"/>
  <path d="M27 52.500q6 2 13-.5l2 1.500" stroke="#888" stroke-width=".8" fill="none"/>
  <rect x="25.300" y="54.200" width="18.700" height="4.600" fill="#7e9c34"/><path d="M30 56.500h9" stroke="#b8cc80" stroke-width=".8"/>
  <ellipse cx="64.500" cy="35.500" rx="8.200" ry="8.200" fill="#f4e520"/><ellipse cx="61.800" cy="32.500" rx="1.800" ry="2.800" fill="#fff" stroke="#666" stroke-width=".4" transform="rotate(-15 61.800 32.500)"/><path d="M64 38.500l3 2.500 2-1" stroke="#c22" stroke-width=".9" fill="none"/>
  <rect x="57.200" y="44" width="11.800" height="5" fill="#7e9c34"/><path d="M61 46.500h7" stroke="#b8cc80" stroke-width=".8"/>
  <circle cx="68.500" cy="10.500" r="1.600" fill="#f0c020"/>
 </svg>
</div>
<!-- t3 -->
<div class="thumb" style="left:161.500px">
 <div class="abs" style="left:0;top:4.500px;width:69px;height:2.400px;background:repeating-linear-gradient(90deg,#d63a3a 0,#d63a3a 1.600px,#f0b0b0 1.600px,#f0b0b0 2.300px)"></div>
 <div class="abs" style="left:17px;top:31px;width:40px;height:1px"></div>
 <svg class="abs" style="left:0;top:0" width="69" height="69"><circle cx="36" cy="36" r="21" fill="none" stroke="#e4eed8" stroke-width=".6"/></svg>
 <div class="abs bx" style="left:26.500px;top:11px;width:18px;height:8.500px;background:#4fb0d4"></div>
 <div class="abs bx" style="left:8.500px;top:21px;width:19px;height:10px;background:#f4934a"></div>
 <div class="abs bx" style="left:43.500px;top:21.500px;width:23px;height:9.500px;background:#45c79c"></div>
 <div class="abs bx" style="left:8.500px;top:40px;width:17.500px;height:10px;background:#e6e84e"></div>
 <div class="abs bx" style="left:42.500px;top:38.500px;width:26px;height:12px;background:#3fcc62"></div>
 <div class="abs bx" style="left:25.500px;top:52px;width:21px;height:10px;background:#7fd84e"></div>
</div>

<!-- t4 stairs -->
<div class="thumb" style="left:239px">
<svg class="abs" style="left:0;top:0" width="69" height="69" viewBox="239 493 69 69">
 <text x="240" y="503" font-family="Liberation Serif" font-weight="bold" font-size="6" fill="#222" textLength="56" lengthAdjust="spacingAndGlyphs">ұлдыздың баспалдақ</text>
 <g fill="#f7e21a"><circle cx="243" cy="520" r="8"/><path d="M243 508l2 5 5-3-2 5 6 0-5 4 5 3-6 1 2 5-5-2-2 6-2-6-5 2 2-5"/></g>
 <path d="M241.500 528c2 2 4 2 5 0" stroke="#c22" stroke-width=".8" fill="none"/>
 <path d="M241 547H252V537H263V527H274V517H285V507H296V498H308" fill="none" stroke="#3f9db8" stroke-width="1.600"/>
 <g font-family="Liberation Sans" font-weight="bold" font-size="5" fill="#fff">
 <path d="M249 551l2-2.500h7.500v7L256.500 558H249z" fill="#1c9fdf"/><path d="M251 548.500h7.500l-2 2.500H249z" fill="#6fc8f2"/><text x="251" y="556.500">1</text>
 <path d="M260 543l2-2.500h7.500v7L267.500 550H260z" fill="#15ab48"/><path d="M262 540.500h7.500l-2 2.500H260z" fill="#5fd484"/><text x="262" y="548.500">2</text>
 <path d="M271 533l2-2.500h7.500v7L278.500 540H271z" fill="#e01a1a"/><path d="M273 530.500h7.500l-2 2.500H271z" fill="#f06060"/><text x="273" y="538.500">3</text>
 <path d="M281 524l2-2.500h7.500v7L288.500 531H281z" fill="#2b3c72"/><path d="M283 521.500h7.500l-2 2.500H281z" fill="#5a6aa0"/><text x="283" y="529.500">4</text>
 <path d="M291 514.500l2-2.500h7.500v7L298.500 521.500H291z" fill="#f2b418"/><path d="M293 512h7.500l-2 2.500H291z" fill="#f8d46a"/><text x="293" y="520">5</text>
 </g>
 <path d="M306 500l1.500 3.500 3.500.3-2.700 2.300.9 3.600-3.200-2-3.200 2 .9-3.600-2.700-2.300 3.500-.3z" fill="#f2b81a"/>
 <circle cx="239" cy="556" r="1.500" fill="#c33"/>
</svg></div>
<!-- t5 hats -->
<div class="thumb" style="left:316px">
<svg class="abs" style="left:0;top:0" width="69" height="69" viewBox="316 493 69 69">
 <rect x="322.500" y="493.500" width="62" height="9" fill="#fff" stroke="#444" stroke-width=".5"/>
 <path d="M325 496h57M341 499.500h22" stroke="#333" stroke-width="1" stroke-dasharray="3 .6"/>
 <ellipse cx="328" cy="509.500" rx="15" ry="6.500" fill="#b4e2ee"/>
 <ellipse cx="330" cy="526" rx="18" ry="7.500" fill="#f7cbb0"/>
 <ellipse cx="333" cy="543.500" rx="21.500" ry="10" fill="#8cd256"/>
 <g stroke="#3a4a3a" stroke-width=".6" opacity=".7"><path d="M318 506h20M317 508.500h22M317 511h24M318 513.500h18"/><path d="M317 521h20M317 523.500h25M317 526h24M317 528.500h22M317 531h26"/><path d="M319 538h16M319 540.500h20M319 543h23M319 545.500h28M319 548h30M319 550.500h22"/></g>
 <path d="M345 516c0-2 3-3 5-6 1-2 2-4 6-4s5 2 6 4c1 3 4 4 4 6s-5 3-10.500 3S345 518 345 516z" fill="#e9e9e9" stroke="#bbb" stroke-width=".5"/>
 <path d="M348 532c0-2 3-3 5-5.500 1-2 2-4 6-4s5 2 6 4c1 2.500 4 3.500 4 5.500s-5 3-10.500 3S348 534 348 532z" fill="#151515"/>
 <path d="M356.500 547c0-2 3-2.500 4.500-4.500 1-2 2-3.500 5-3.500s4.500 1.500 5.500 3.500c1 2 4 2.500 4 4.500s-4.500 3-9.500 3S356.500 549 356.500 547z" fill="#1624e0"/>
 <path d="M360 513.500h24M360 516.500h18" stroke="#333" stroke-width=".8"/><path d="M358 532.500h27" stroke="#333" stroke-width=".8"/><path d="M357 549h28M357 552h16" stroke="#333" stroke-width=".8"/>
 <path d="M316 553l18 1 14 8h-32z" fill="#0c3a52"/><path d="M316 556l22 6h-22z" fill="#1c9fc4"/>
 <path d="M340 556.500h30M342 559h26" stroke="#777" stroke-width=".6"/>
</svg></div>
<!-- t6 selected -->
<div class="abs" style="left:392.700px;top:492.200px;width:70.600px;height:70.600px;background:#dcbc44"></div>
<div class="abs" style="left:393.700px;top:493.200px;width:68.600px;height:68.600px;overflow:hidden">
<svg class="abs" style="left:-.7px;top:-.7px" width="70" height="70" viewBox="203 65 381 381"><use href="#sc"/></svg>
<div class="abs" style="left:0;top:0;width:69px;height:69px;background:rgba(40,40,40,.45)"></div>
</div>
<!-- t7 doc -->
<div class="thumb" style="left:471px">
<svg class="abs" style="left:0;top:0" width="69" height="69" viewBox="0 0 69 69"><rect x="0" y="0" width="69" height="1.100" fill="#5b9be0"/><rect x="0" y="7.200" width="69" height=".7" fill="#4a8ad0"/><rect x="0" y="66.600" width="69" height="2.400" fill="#4f95dd"/><rect x="0" y="65.800" width="69" height=".8" fill="#a8ccf0"/><path d="M5.400 4.400H63.700" stroke="#1a1a1a" stroke-opacity=".85" stroke-width="2.200" stroke-dasharray="2.300 .7"/><path d="M7.700 8V66" stroke="#aaa" stroke-width=".4"/><path d="M8.0 8.7H32.7" stroke="#333" stroke-opacity="0.55" stroke-width="1" stroke-dasharray="1.700 .5 2.600 .45 1.100 .5"/><path d="M8.0 11.3H52.1" stroke="#333" stroke-opacity="0.6" stroke-width="1" stroke-dasharray="1.700 .5 2.600 .45 1.100 .5"/><path d="M8.0 13.5H69.3" stroke="#333" stroke-opacity="0.6" stroke-width="1" stroke-dasharray="1.700 .5 2.600 .45 1.100 .5"/><path d="M8.0 15.6H69.3" stroke="#333" stroke-opacity="0.65" stroke-width="1" stroke-dasharray="1.700 .5 2.600 .45 1.100 .5"/><path d="M8.0 18.2H69.3" stroke="#333" stroke-opacity="0.6" stroke-width="1" stroke-dasharray="1.700 .5 2.600 .45 1.100 .5"/><path d="M8.0 21.0H69.3" stroke="#333" stroke-opacity="0.4" stroke-width="1" stroke-dasharray="1.700 .5 2.600 .45 1.100 .5"/><path d="M8.0 23.3H57.3" stroke="#333" stroke-opacity="0.4" stroke-width="1" stroke-dasharray="1.700 .5 2.600 .45 1.100 .5"/><path d="M11.9 25.6H69.3" stroke="#333" stroke-opacity="0.75" stroke-width="1" stroke-dasharray="1.700 .5 2.600 .45 1.100 .5"/><path d="M8.0 27.5H69.3" stroke="#333" stroke-opacity="0.6" stroke-width="1" stroke-dasharray="1.700 .5 2.600 .45 1.100 .5"/><path d="M8.0 29.4H28.8" stroke="#333" stroke-opacity="0.6" stroke-width="1" stroke-dasharray="1.700 .5 2.600 .45 1.100 .5"/><path d="M11.9 31.8H49.5" stroke="#333" stroke-opacity="0.6" stroke-width="1" stroke-dasharray="1.700 .5 2.600 .45 1.100 .5"/><path d="M8.0 34.0H27.5" stroke="#333" stroke-opacity="0.55" stroke-width="1" stroke-dasharray="1.700 .5 2.600 .45 1.100 .5"/><path d="M11.9 36.3H24.9" stroke="#333" stroke-opacity="0.5" stroke-width="1" stroke-dasharray="1.700 .5 2.600 .45 1.100 .5"/><path d="M11.9 37.9H69.3" stroke="#333" stroke-opacity="0.6" stroke-width="1" stroke-dasharray="1.700 .5 2.600 .45 1.100 .5"/><path d="M8.0 40.5H69.3" stroke="#333" stroke-opacity="0.8" stroke-width="1" stroke-dasharray="1.700 .5 2.600 .45 1.100 .5"/><path d="M8.0 42.4H69.3" stroke="#333" stroke-opacity="0.8" stroke-width="1" stroke-dasharray="1.700 .5 2.600 .45 1.100 .5"/><path d="M8.0 44.7H69.3" stroke="#333" stroke-opacity="0.65" stroke-width="1" stroke-dasharray="1.700 .5 2.600 .45 1.100 .5"/><path d="M8.0 47.0H69.3" stroke="#333" stroke-opacity="0.65" stroke-width="1" stroke-dasharray="1.700 .5 2.600 .45 1.100 .5"/><path d="M8.0 49.3H54.7" stroke="#333" stroke-opacity="0.6" stroke-width="1" stroke-dasharray="1.700 .5 2.600 .45 1.100 .5"/><path d="M8.0 53.4H38.5" stroke="#333" stroke-opacity="0.4" stroke-width="1" stroke-dasharray="1.700 .5 2.600 .45 1.100 .5"/><path d="M8.0 55.5H31.4" stroke="#333" stroke-opacity="0.45" stroke-width="1" stroke-dasharray="1.700 .5 2.600 .45 1.100 .5"/><path d="M8.0 57.6H30.1" stroke="#333" stroke-opacity="0.55" stroke-width="1" stroke-dasharray="1.700 .5 2.600 .45 1.100 .5"/><path d="M8.0 62.3H34.0" stroke="#333" stroke-opacity="0.4" stroke-width="1" stroke-dasharray="1.700 .5 2.600 .45 1.100 .5"/><path d="M8.0 64.5H45.7" stroke="#333" stroke-opacity="0.4" stroke-width="1" stroke-dasharray="1.700 .5 2.600 .45 1.100 .5"/><path d="M0.0 8.7H2.9" stroke="#444" stroke-opacity=".6" stroke-width="1"/><path d="M0.0 11.3H3.1" stroke="#444" stroke-opacity=".6" stroke-width="1"/><path d="M0.0 15.6H4.2" stroke="#444" stroke-opacity=".6" stroke-width="1"/><path d="M0.0 21.0H2.2" stroke="#444" stroke-opacity=".6" stroke-width="1"/><path d="M0.0 53.4H7.4" stroke="#444" stroke-opacity=".6" stroke-width="1"/><path d="M0.0 57.6H5.4" stroke="#444" stroke-opacity=".6" stroke-width="1"/><path d="M0.0 59.7H5.4" stroke="#444" stroke-opacity=".6" stroke-width="1"/><path d="M0.0 62.3H4.2" stroke="#444" stroke-opacity=".6" stroke-width="1"/><path d="M0 50.6H69" stroke="#666" stroke-width=".4"/><path d="M0 52.5H69" stroke="#666" stroke-width=".4"/><path d="M0 56.4H69" stroke="#666" stroke-width=".4"/><path d="M0 58.6H69" stroke="#666" stroke-width=".4"/><path d="M0 60.6H69" stroke="#666" stroke-width=".4"/><path d="M0 51.5H4.800M38.5 51.5H47.0" stroke="#222" stroke-width="1.100"/></svg>
</div>
<!-- t8 table -->
<div class="thumb" style="left:548px">
<svg class="abs" style="left:0;top:0" width="69" height="69" viewBox="0 0 69 69"><path d="M21 8.700H47.600" stroke="#222" stroke-width="1.900" stroke-dasharray="2 .5 1.400 .5"/><rect x="0" y="11.900" width="69" height="3.900" fill="#2d9dc0"/><rect x="23" y="15.8" width="46" height="6.9" fill="#d3e3ec"/><rect x="23" y="22.7" width="46" height="6.7" fill="#eaf2f5"/><rect x="23" y="29.4" width="46" height="7.4" fill="#d0e0ea"/><rect x="23" y="36.8" width="46" height="10.5" fill="#e8eef8"/><rect x="23" y="47.3" width="46" height="7.4" fill="#d3e2ea"/><rect x="23" y="54.7" width="46" height="6.8" fill="#e8f0f6"/><rect x="0" y="15.800" width="23" height="45.700" fill="#2b9cc0"/><path d="M0 13.9H19" stroke="#0c4a68" stroke-opacity=".55" stroke-width="1.300" stroke-dasharray="2.200 .5 1.300 .4"/><path d="M1 17.5H22" stroke="#0c4a68" stroke-opacity=".55" stroke-width="1.300" stroke-dasharray="2.200 .5 1.300 .4"/><path d="M0 20.9H17" stroke="#0c4a68" stroke-opacity=".55" stroke-width="1.300" stroke-dasharray="2.200 .5 1.300 .4"/><path d="M3 24.5H21" stroke="#0c4a68" stroke-opacity=".55" stroke-width="1.300" stroke-dasharray="2.200 .5 1.300 .4"/><path d="M0 27.8H19" stroke="#0c4a68" stroke-opacity=".55" stroke-width="1.300" stroke-dasharray="2.200 .5 1.300 .4"/><path d="M3 31.5H22" stroke="#0c4a68" stroke-opacity=".55" stroke-width="1.300" stroke-dasharray="2.200 .5 1.300 .4"/><path d="M3 35H19" stroke="#0c4a68" stroke-opacity=".55" stroke-width="1.300" stroke-dasharray="2.200 .5 1.300 .4"/><path d="M0 38.8H19" stroke="#0c4a68" stroke-opacity=".55" stroke-width="1.300" stroke-dasharray="2.200 .5 1.300 .4"/><path d="M3 42.5H17" stroke="#0c4a68" stroke-opacity=".55" stroke-width="1.300" stroke-dasharray="2.200 .5 1.300 .4"/><path d="M0 45.6H19" stroke="#0c4a68" stroke-opacity=".55" stroke-width="1.300" stroke-dasharray="2.200 .5 1.300 .4"/><path d="M0 49.5H21" stroke="#0c4a68" stroke-opacity=".55" stroke-width="1.300" stroke-dasharray="2.200 .5 1.300 .4"/><path d="M0 53H21" stroke="#0c4a68" stroke-opacity=".55" stroke-width="1.300" stroke-dasharray="2.200 .5 1.300 .4"/><path d="M3 56.8H22" stroke="#0c4a68" stroke-opacity=".55" stroke-width="1.300" stroke-dasharray="2.200 .5 1.300 .4"/><path d="M3 60H22" stroke="#0c4a68" stroke-opacity=".55" stroke-width="1.300" stroke-dasharray="2.200 .5 1.300 .4"/><path d="M26 13.900H36.5" stroke="#0c4a68" stroke-opacity=".7" stroke-width="1.400"/><path d="M44 13.900H51" stroke="#0c4a68" stroke-opacity=".7" stroke-width="1.400"/><path d="M60 13.900H69" stroke="#0c4a68" stroke-opacity=".7" stroke-width="1.400"/><path d="M23 11.900V61.500" stroke="#8fb0c0" stroke-width=".5"/><path d="M39.5 11.900V61.500" stroke="#8fb0c0" stroke-width=".5"/><path d="M56.5 11.900V61.500" stroke="#8fb0c0" stroke-width=".5"/><path d="M0 22.7H69" stroke="#a8c4d2" stroke-width=".3"/><path d="M0 29.4H69" stroke="#a8c4d2" stroke-width=".3"/><path d="M0 36.8H69" stroke="#a8c4d2" stroke-width=".3"/><path d="M0 47.3H69" stroke="#a8c4d2" stroke-width=".3"/><path d="M0 54.7H69" stroke="#a8c4d2" stroke-width=".3"/><path d="M0 61.500L30 69H0z" fill="#0a2030"/><path d="M0 64.500L22 69H0z" fill="#2aa8d0"/><path d="M0 61.500L44 69H30z" fill="#b8dce8"/></svg>
</div>
<!-- t9 -->
<div class="thumb" style="left:626px;background:#f3f2ee">
 <div class="abs" style="left:0;top:0;width:69px;height:5px;background:linear-gradient(180deg,#edcf9c,#f6e6c8)"></div>
 <div class="abs" style="left:0;top:64px;width:69px;height:5px;background:linear-gradient(180deg,#f6e6c8,#eccc98)"></div>
 <div class="abs" style="left:0;top:5px;width:69px;height:50px;background:#f7f6f3"></div>
 <div class="abs" style="left:0;top:55px;width:69px;height:9px;background:#efeeea;border-top:.7px solid #aaa"></div>
 <div class="abs" style="left:3.500px;top:15px;width:62px;height:39px;border:.8px solid #c9c9a0;background:#f9f8f5"></div>
 <div class="abs" style="left:0;top:31px;width:5.500px;height:6px;background:#4a3a30"></div><div class="abs" style="left:63.500px;top:31px;width:5.500px;height:6px;background:#4a3a30"></div>
 <div class="abs" style="left:0;top:10px;font-family:'Liberation Serif',serif;font-size:4px;line-height:5px;color:#555">тақырыбы</div>
 <div class="abs" style="left:7.500px;top:21px;font-family:'Liberation Serif',serif;font-size:5.700px;line-height:7.500px;color:#333;white-space:nowrap;letter-spacing:-.1px">ҚАЛЫПТАСТЫРУШЫ<br>БАҒАЛАУДЫҢ<br>ТИІМДІ ӘДІСТЕРІ</div>
</div>
<!-- t10 -->
<div class="thumb" style="left:703px;width:38px;background:#2b9ee2">
 <div class="abs" style="left:1.500px;top:2px;width:45px;height:6px;border-radius:3px;background:#86de52"></div>
 <div class="abs" style="left:15px;top:3.500px;width:25px;height:2px;background:#3ec6d6;opacity:.8"></div>
 <div class="abs" style="left:-6px;top:14px;width:30px;height:12.500px;border-radius:50%;background:#84dc50"></div>
 <div class="abs" style="left:0;top:19.500px;width:15px;height:1.500px;background:#b8502a;opacity:.8"></div>
 <div class="abs" style="left:13px;top:25px;width:9px;height:1.500px;background:#f08a6a;transform:rotate(-20deg)"></div><div class="abs" style="left:12.500px;top:27px;width:1.500px;height:4px;background:#f08a6a"></div>
 <div class="abs" style="left:0;top:31px;width:38px;height:20px;background:#7ed848"></div>
 <div class="abs" style="left:0;top:32px;width:38px;height:18px;background:repeating-linear-gradient(180deg,transparent 0,transparent 1px,rgba(60,205,200,.6) 1px,rgba(60,205,200,.6) 2.800px,transparent 2.800px,transparent 3.600px)"></div>
 <div class="abs" style="left:0;top:55px;width:12.500px;height:11px;background:#f4f0e0"></div>
 <div class="abs" style="left:1px;top:55.500px;width:10.500px;height:10.500px;border-radius:50%;background:radial-gradient(circle at 40% 35%,#ffe030,#e8a800)"></div>
 <div class="abs" style="left:4px;top:61.500px;width:5px;height:2.500px;border-radius:0 0 3px 3px;background:#c22"></div>
 <div class="abs" style="left:17px;top:55px;width:17px;height:11px;background:#f6f2ee"></div>
 <div class="abs" style="left:19px;top:56.500px;width:12px;height:8px;border-radius:50%;border:1.200px solid #e89a6a"></div><div class="abs" style="left:22px;top:57.500px;width:10px;height:6px;border-radius:50%;border:1px solid #e8a070"></div>
</div>
</div>
<div id="panel" class="abs">
<div class="abs" style="left:17.500px;top:8.800px;width:272px;font-size:16.100px;line-height:18.600px;color:#3833cc;white-space:nowrap"><span id="p1" style="display:inline-block;transform-origin:0 50%;transform:scaleX(.963)">Сауат ашу. Сабақтың тақырыбы: К</span><br><span id="p2" style="display:inline-block;transform-origin:0 50%;transform:scaleX(.963)">к дыбысы мен әрпі</span></div>
<div class="abs" style="left:23px;top:51px;width:3px;height:2px;background:#e8d020"></div><div class="abs" style="left:23px;top:54px;width:3px;height:6px;background:#f0dc30"></div>
<div class="abs" style="left:34.400px;top:49.500px;font-size:12px;line-height:13px;font-weight:bold;color:#0a7a0a;white-space:nowrap"><span id="p3" style="display:inline-block;transform-origin:0 50%">infourok.ru</span></div>
<div class="abs" style="left:17.500px;top:66px;font-size:12px;line-height:14.300px;color:#3a3a3a;white-space:nowrap"><span id="p4" style="display:inline-block;transform-origin:0 50%"><b style="color:#111">Бағалау</b> (мадақтау) Барлығы түсіндім</span><br><span id="p5" style="display:inline-block;transform-origin:0 50%">Жартылай түсіндім Түсінбедім.</span></div>
<div class="abs" style="left:17.400px;top:102px;width:61.600px;height:23.200px;background:#c8d6f0;border-radius:2px;font-size:11px;line-height:23px;color:#555;text-align:center"><span id="p6" style="display:inline-block">Ба5алау</span></div>
<div class="abs" style="left:18px;top:145px;width:257.400px;height:31.400px;background:#ffdb3c;border-radius:3px"></div>
<svg class="abs" style="left:27px;top:152.800px" width="14" height="17" viewBox="0 0 14 17"><path d="M4.500 0h5v6h4L7 12.500 0.500 6h4z" fill="#111"/><rect x="0.500" y="14.600" width="13" height="2" fill="#111"/></svg>
<div class="abs t12" style="left:51.700px;top:153px"><span id="p7" class="sp">Открыть</span></div>
<div class="abs t12" style="left:208.300px;top:153px"><span id="p8" class="sp">1096×794</span></div>
<svg class="abs" style="left:24px;top:192.600px" width="20" height="16" viewBox="0 0 20 16"><path d="M0 3.500a1 1 0 0 1 1-1h4l1.500-2.500h7L15 2.500h4a1 1 0 0 1 1 1V15a1 1 0 0 1-1 1H1a1 1 0 0 1-1-1z" fill="#111"/><circle cx="10.300" cy="8.800" r="3.500" fill="none" stroke="#fff" stroke-width="1.600"/><path d="M12.600 11.200l2.600 2.600" stroke="#fff" stroke-width="1.800"/></svg>
<div class="abs t12" style="left:51.700px;top:193px"><span id="p9" class="sp">Другие размеры и похожие</span></div>
<svg class="abs" style="left:26.600px;top:226.300px" width="14" height="17" viewBox="0 0 14 17"><path d="M1 1h12v14.500L7 10.500 1 15.500z" fill="none" stroke="#111" stroke-width="1.800"/></svg>
<div class="abs t12" style="left:51.700px;top:226.600px"><span id="p10" class="sp">Добавить в коллекцию</span></div>
<svg class="abs" style="left:24px;top:259px" width="20" height="17" viewBox="0 0 20 17"><path d="M11 0L20 7.500 11 15v-4.500C6 10.500 2.500 12.500 0 17 0.500 10 4.500 5 11 4.500z" fill="#111"/></svg>
<div class="abs" style="left:51.700px;top:250.800px;width:59.200px;height:32.800px;background:#3b8cfb"></div>
<div class="abs t12" style="left:51.700px;top:259px;color:#fff"><span id="p11" class="sp">Отправить</span></div>
<div class="abs" style="left:45.600px;top:430px;font-size:15.550px;line-height:18px;color:#bcbcbc;white-space:nowrap"><span id="w1" class="sp">Активация Windows</span></div>
<div class="abs" style="left:45.600px;top:449px;font-size:11.700px;line-height:15.800px;color:#c0c0c0;white-space:nowrap"><span id="w2" class="sp">Чтобы активировать Windows, перейдите в</span><br><span id="w3" class="sp">раздел "Параметры".</span></div>
</div>

<div class="abs" style="left:1033px;top:72px;width:21px;height:29px;background:#5e4c10;border-radius:0 3px 3px 0"></div>
<div class="abs" style="left:1039px;top:79px;font-size:10px;color:#2e2808">ти</div>
<div class="abs" style="left:1033px;top:115px;width:8px;height:90px;background:#424242;border-radius:0 5px 5px 0"></div>
<div class="abs" style="left:1041px;top:160px;width:26px;height:1px;background:#474747"></div><div class="abs" style="left:1033px;top:499px;width:23px;height:36px;border-radius:0 18px 18px 0;background:#434343"></div><div class="abs" style="left:1033px;top:514px;width:2px;height:5px;background:#2c2c2c"></div>
<svg class="abs" style="left:1044px;top:66px" width="13" height="13" viewBox="0 0 13 13"><path d="M1 1L12 12M12 1L1 12" stroke="#fff" stroke-width="1.800"/></svg>
<div id="taskbar" class="abs">
<svg class="abs" style="left:0;top:0" width="1067" height="32" viewBox="0 570 1067 32">
<defs>
<linearGradient id="op" x1="0" y1="0" x2="0" y2="1"><stop offset="0" stop-color="#ff2030"/><stop offset="1" stop-color="#b00a14"/></linearGradient>
</defs>
<rect x="191.500" y="570.500" width="37.500" height="31.500" fill="#2d3035"/>
<!-- windows -->
<g fill="#fff"><path d="M12 582l5.300-.75v5H12zM18 581.100l7-1v6.150h-7zM12 586.950h5.300v5L12 591.200zM18 586.950h7v6.150l-7-1z"/></g>
<!-- search -->
<circle cx="58.500" cy="583.500" r="4.300" fill="none" stroke="#fff" stroke-width="1.200"/><path d="M55.400 586.800L50.600 592" stroke="#fff" stroke-width="1.300"/>
<!-- taskview -->
<rect x="88.500" y="580.700" width="10.500" height="10.200" rx=".8" fill="none" stroke="#fff" stroke-width="1.100"/><path d="M86.500 582.500h-1.200v6.600h1.200M101 582.500h1.200v6.600H101" fill="none" stroke="#fff" stroke-width="1"/>
<!-- opera -->
<ellipse cx="133.500" cy="585.800" rx="9" ry="8.900" fill="url(#op)"/><ellipse cx="133.500" cy="585.800" rx="3.700" ry="6.500" fill="#0c0e13"/>
<!-- yandex -->
<path d="M162.500 577.500h12.500l5.800 8.600-5.800 8.800h-12.500a.8.800 0 0 1-.8-.8v-15.800a.8.800 0 0 1 .8-.8z" fill="#f1f1f1"/><rect x="161.700" y="577.500" width="12.700" height="17.400" rx=".8" fill="#e3231b"/>
<text x="164.200" y="591.300" font-family="Liberation Sans" font-size="13.500" fill="#fff">Я</text>
<!-- ya browser -->
<circle cx="210" cy="586.300" r="9" fill="#f4f4f4"/><path d="M205.300 580.300l4.700 6.200v6M214.700 580.300l-4.700 6.200" stroke="#e3231b" stroke-width="2.300" fill="none" stroke-linecap="round"/>
<!-- word -->
<path d="M246 577.200h10.500v15.600H246z" fill="#f4f6fa"/><path d="M248 580h7M248 582h7M248 584h7M248 586h7M248 588h7M248 590h7" stroke="#7a9bd0" stroke-width=".7"/>
<path d="M239.400 578.600l9.800-1.800v17l-9.800-1.800z" fill="#2a5caa"/><text x="240.800" y="589.300" font-family="Liberation Sans" font-weight="bold" font-size="8.500" fill="#fff">W</text>
<!-- explorer -->
<path d="M278 580.200h6l1.200 1.400h9.800v11.600h-17z" fill="#f2c13c"/><path d="M278 583h17v10.200h-17z" fill="#f8d867"/><path d="M281.500 587h10v6.200h-10z" fill="#3b9be3"/><path d="M284.500 590.500h4v2.700h-4z" fill="#f8d867"/><path d="M281.500 587h10v1.500h-10z" fill="#7cc4f5"/>
<!-- whatsapp -->
<circle cx="322.300" cy="584.800" r="8.600" fill="#2cb742"/><path d="M315 594.500l1.600-4.800 3 2.700z" fill="#2cb742"/><circle cx="322.300" cy="584.800" r="6.800" fill="none" stroke="#fff" stroke-width=".9"/>
<path d="M319.200 581.800c.6-1 1.400-.8 1.800 0l.5 1.200c.2.500-.5.900-.5 1.300.5 1.200 1.600 2.200 2.800 2.700.5 0 .8-.8 1.300-.6l1.200.6c.8.400.8 1.200 0 1.800-1.200.9-3 .2-4.600-1.100-1.600-1.400-3.200-4-2.500-5.900z" fill="#fff"/>
<circle cx="329.300" cy="591.800" r="5.100" fill="#e81123"/><text x="325.500" y="594.400" font-family="Liberation Sans" font-weight="bold" font-size="7" fill="#fff" textLength="7.600" lengthAdjust="spacingAndGlyphs">16</text>
<!-- underlines -->
<g fill="#76b9ed"><rect x="191.500" y="600" width="37.500" height="2"/><rect x="233" y="600" width="31" height="2"/><rect x="271" y="600" width="31" height="2"/><rect x="308.500" y="600" width="31.500" height="2"/></g>
<rect x="262" y="600" width="2" height="2" fill="#4a6a8a"/>
<!-- tray -->
<path d="M876 588.500l4.200-4 4.200 4" fill="none" stroke="#fff" stroke-width="1.100"/>
<path d="M898.500 580c.7 0 1.100.6 1.100 1.400v3l4.600 2.600v1.300l-4.600-1.300v2.800l1.400 1v1l-2.500-.6-2.500.6v-1l1.400-1V587l-4.600 1.300V587l4.600-2.600v-3c0-.8.400-1.400 1.100-1.400z" fill="none" stroke="#fff" stroke-width=".9" transform="rotate(90 898.500 586.500)"/>
<rect x="914.500" y="583.500" width="8.500" height="5.500" fill="none" stroke="#fff" stroke-width="1"/><rect x="923.400" y="585" width="1.200" height="2.600" fill="#fff"/><path d="M911.500 581v2.500M914 581v2.500M910.800 583.500h4v2c0 1-1 1.700-2 1.700v3" fill="none" stroke="#fff" stroke-width=".9"/>
<path d="M930.500 584.800h2l2.800-2.600v8.800l-2.800-2.600h-2z" fill="none" stroke="#fff" stroke-width=".9"/><path d="M937 584.300c.8.800.8 3.800 0 4.600M938.800 582.800c1.600 1.800 1.600 5.800 0 7.600M940.600 581.300c2.300 2.700 2.300 8 0 10.600" fill="none" stroke="#fff" stroke-width=".8" opacity=".85"/>
<text x="951.500" y="590" font-family="Liberation Sans" font-size="8.800" fill="#fff" textLength="17" lengthAdjust="spacingAndGlyphs">ҚАЗ</text>
<text x="988.200" y="582.600" font-family="Liberation Sans" font-size="8.800" fill="#fff" textLength="22" lengthAdjust="spacingAndGlyphs">21:58</text>
<text x="979" y="595.800" font-family="Liberation Sans" font-size="8.800" fill="#fff" textLength="42.300" lengthAdjust="spacingAndGlyphs">05.10.2019</text>
<!-- notification -->
<path d="M1035 580.500h12.500v9h-9.500l-3 2.600z" fill="#fff"/><path d="M1037 583h8.500M1037 585h8.500M1037 587h8.500" stroke="#0c0e13" stroke-width=".8"/>
<circle cx="1047" cy="591.900" r="6" fill="#3e3e40"/><text x="1044.700" y="595" font-family="Liberation Sans" font-size="8.500" fill="#fff">1</text>
<rect x="1064" y="570" width=".8" height="32" fill="#666"/>
</svg>
</div>
</body></html>
